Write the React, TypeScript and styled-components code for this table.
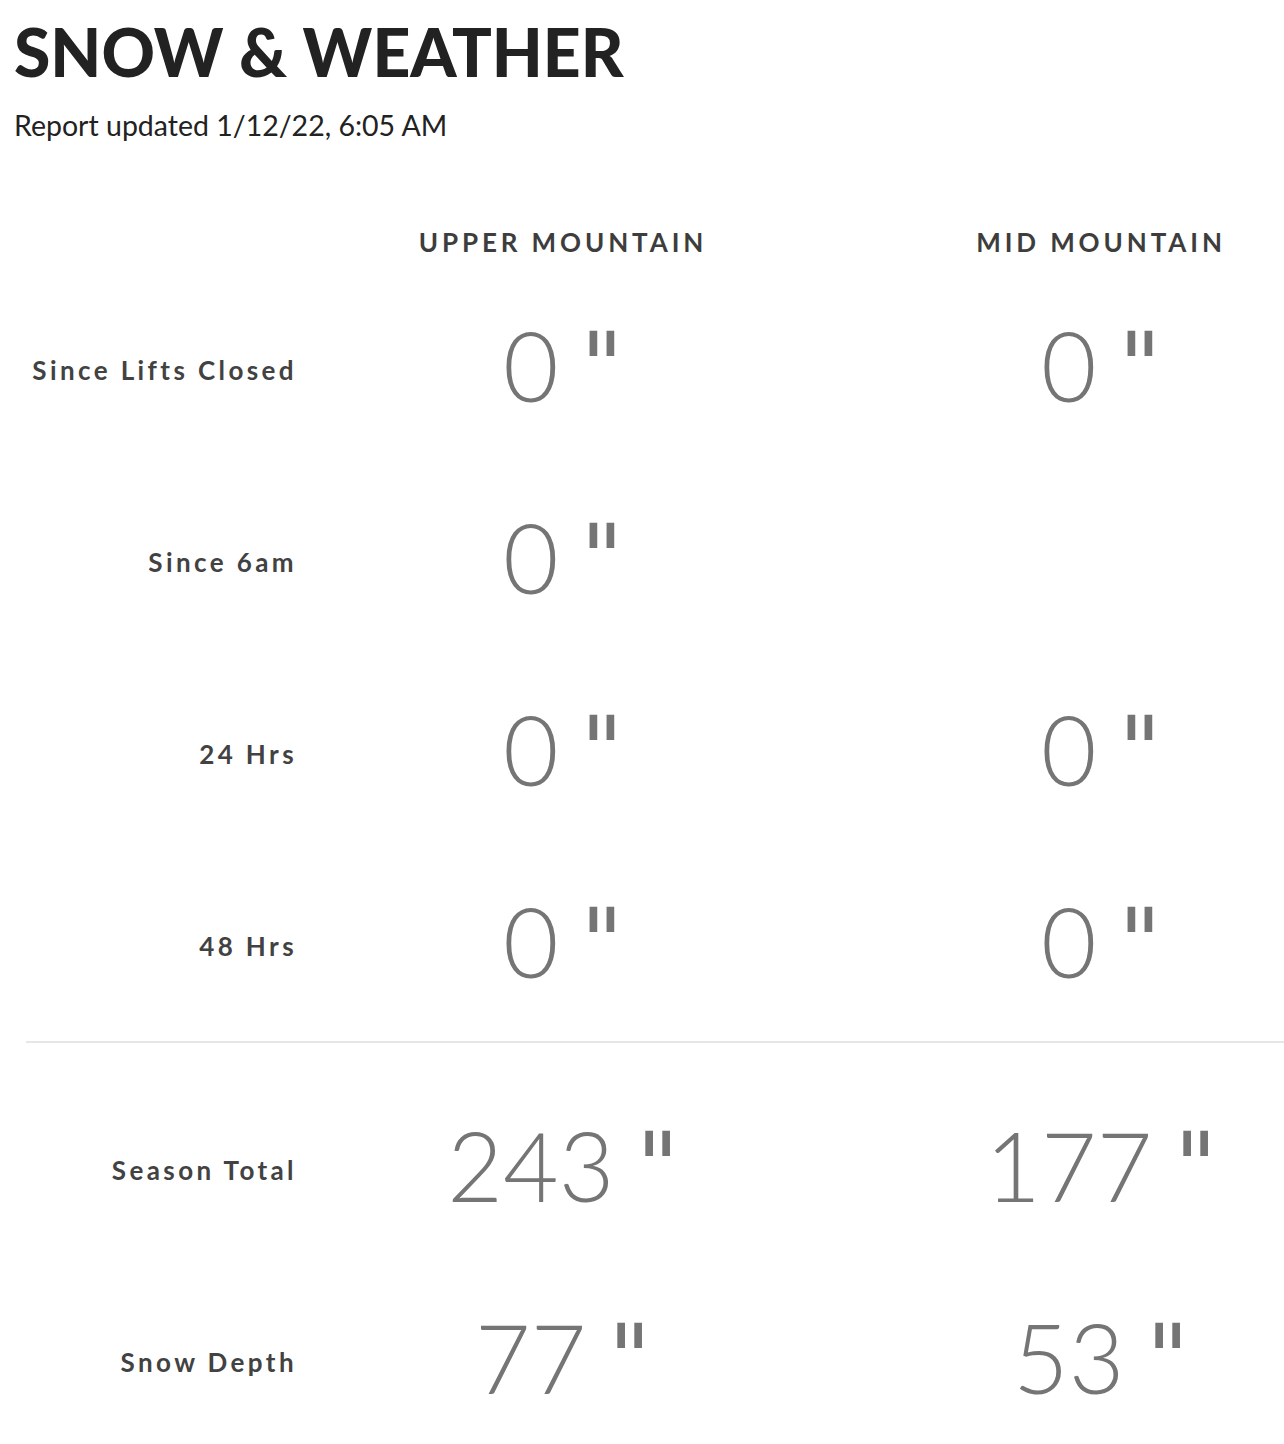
import React from "react";
import styled, { createGlobalStyle } from "styled-components";

const GlobalStyle = createGlobalStyle`
  html, body {
    margin: 0;
    padding: 0;
    background: #ffffff;
  }
  body {
    font-family: Lato, "Liberation Sans", sans-serif;
    overflow-x: hidden;
  }
`;

const Page = styled.div`
  width: 1284px;
  overflow: hidden;
  padding-top: 18px;
  box-sizing: border-box;
`;

const Title = styled.h1`
  margin: 0 0 0 14px;
  font-size: 66px;
  line-height: 68px;
  font-weight: 900;
  color: #222222;
`;

const Updated = styled.p`
  margin: 21px 0 0 14px;
  font-size: 28.5px;
  line-height: 36px;
  color: #222222;
`;

const Row = styled.div<{ $height: number }>`
  display: grid;
  grid-template-columns: 294px 538px 538px;
  height: ${(p) => p.$height}px;
  align-items: center;
`;

const HeadRow = styled(Row)`
  margin-top: 72px;
`;

const ColumnHead = styled.div`
  text-align: center;
  font-size: 26px;
  font-weight: 700;
  letter-spacing: 3.9px;
  color: #3d3d3d;
`;

const Label = styled.div`
  text-align: right;
  font-size: 26px;
  font-weight: 700;
  letter-spacing: 3.4px;
  color: #424242;
  padding-top: 10px;
  margin-right: -3px;
`;

const Value = styled.div`
  text-align: center;
  font-size: 96px;
  font-weight: 300;
  color: #757575;
  line-height: 1;
`;

const Unit = styled.span`
  font-family: "DejaVu Sans", sans-serif;
  font-weight: 400;
  font-size: 92px;
  margin-left: -4px;
  vertical-align: 3px;
`;

const Divider = styled.hr`
  margin: 4px 0 26px 26px;
  border: none;
  height: 2px;
  background: #e6e6e6;
`;

type Stat = { label: string; upper: string; mid?: string };

const recent: Stat[] = [
  { label: "Since Lifts Closed", upper: "0", mid: "0" },
  { label: "Since 6am", upper: "0" },
  { label: "24 Hrs", upper: "0", mid: "0" },
  { label: "48 Hrs", upper: "0", mid: "0" },
];

const totals: Stat[] = [
  { label: "Season Total", upper: "243", mid: "177" },
  { label: "Snow Depth", upper: "77", mid: "53" },
];

const Inches = ({ value }: { value?: string }) => (
  <Value>
    {value !== undefined && (
      <>
        {value} <Unit>"</Unit>
      </>
    )}
  </Value>
);

const StatRow = ({ stat }: { stat: Stat }) => (
  <Row $height={192}>
    <Label>{stat.label}</Label>
    <Inches value={stat.upper} />
    <Inches value={stat.mid} />
  </Row>
);

const App = () => {
  return (
    <Page>
      <GlobalStyle />
      <Title>SNOW &amp; WEATHER</Title>
      <Updated>Report updated 1/12/22, 6:05 AM</Updated>
      <HeadRow $height={54}>
        <div />
        <ColumnHead>UPPER MOUNTAIN</ColumnHead>
        <ColumnHead>MID MOUNTAIN</ColumnHead>
      </HeadRow>
      {recent.map((s) => (
        <StatRow key={s.label} stat={s} />
      ))}
      <Divider />
      {totals.map((s) => (
        <StatRow key={s.label} stat={s} />
      ))}
    </Page>
  );
};

export default App;
